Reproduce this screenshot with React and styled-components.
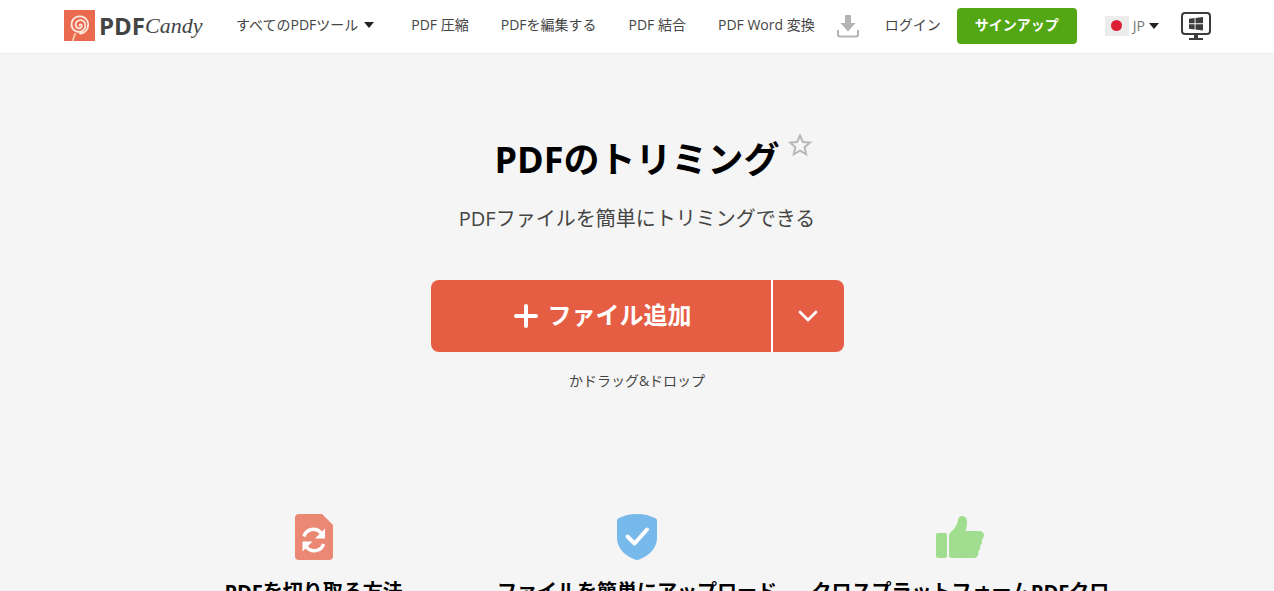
import React from 'react'
import styled, { createGlobalStyle } from 'styled-components'

const GlobalStyle = createGlobalStyle`
  *, *::before, *::after {
    box-sizing: border-box;
  }

  body {
    margin: 0;
    background: #f5f5f5;
    color: #444;
    font-family: 'Open Sans', 'Noto Sans CJK JP', sans-serif;
    font-size: 14px;
    line-height: 20px;
  }

  button {
    font-family: inherit;
    border: 0;
    padding: 0;
    cursor: pointer;
  }

  svg {
    display: block;
    flex-shrink: 0;
  }
`

const Header = styled.header`
  display: flex;
  align-items: center;
  justify-content: space-between;
  height: 54px;
  padding: 0 63px 2px 64px;
  background: #fff;
  border-bottom: 1px solid #ececec;
  white-space: nowrap;
`

const Group = styled.div`
  display: flex;
  align-items: center;
`

const Logo = styled.a`
  display: flex;
  align-items: center;
  width: 135px;
  margin-right: 37px;
  color: #444;
  text-decoration: none;
`

const LogoName = styled.span`
  margin-left: 4px;
  font-size: 24px;
  line-height: 32px;
  font-weight: 700;
`

const LogoScript = styled.span`
  font-family: 'Liberation Serif', serif;
  font-size: 22px;
  line-height: 32px;
  font-style: italic;
`

const Nav = styled.nav`
  display: flex;
  align-items: center;
  gap: 32px;
`

const NavLink = styled.a`
  padding-bottom: 2px;
  color: #444;
  text-decoration: none;
`

const MenuButton = styled.button`
  display: flex;
  align-items: center;
  gap: ${props => props.$gap}px;
  margin-right: ${props => props.$after || 0}px;
  padding-bottom: ${props => props.$lift || 0}px;
  background: none;
  color: ${props => props.$color || '#444'};
  font-size: 14px;
  line-height: 20px;
`

const Caret = styled.span`
  border: 5px solid transparent;
  border-top: 6px solid #222;
  border-bottom: 0;
`

const IconLink = styled.a`
  margin-right: ${props => props.$after || 0}px;
  padding-top: 2px;
`

const SignUp = styled.button`
  width: 120px;
  height: 36px;
  margin: 0 28px 0 16px;
  padding-bottom: 2px;
  border-radius: 4px;
  background: #53a614;
  color: #fff;
  font-size: 14px;
  line-height: 20px;
  font-weight: 700;
`

const Flag = styled.span`
  display: flex;
  align-items: center;
  justify-content: center;
  width: 24px;
  height: 20px;
  background: #ececec;

  &::before {
    content: '';
    width: 11px;
    height: 11px;
    border-radius: 50%;
    background: #dc1f35;
  }
`

const Hero = styled.section`
  display: flex;
  flex-direction: column;
  align-items: center;
  padding: 82px 20px 0;
  text-align: center;
`

const Title = styled.h1`
  position: relative;
  margin: 0;
  color: #000;
  font-size: 36px;
  line-height: 48px;
  font-weight: 700;
`

const Favorite = styled.button`
  position: absolute;
  top: -4px;
  left: 100%;
  margin-left: 8px;
  background: none;
`

const Subtitle = styled.p`
  margin: 21px 0 47px;
  font-size: 20px;
  line-height: 28px;
`

const Upload = styled.div`
  display: flex;
  gap: 2px;
  width: 100%;
  max-width: 413px;
  height: 72px;
  border-radius: 8px;
  overflow: hidden;
  background: #fff;
`

const AddFile = styled.button`
  flex: 1;
  display: flex;
  align-items: center;
  justify-content: center;
  gap: 10px;
  padding: 0 0 2px 4px;
  background: #e55d42;
  color: #fff;
  font-size: 24px;
  line-height: 32px;
  font-weight: 700;
`

const MoreSources = styled.button`
  display: flex;
  align-items: center;
  justify-content: center;
  width: 71px;
  background: #e55d42;
`

const DropHint = styled.p`
  margin: 19px 0 0;
`

const Features = styled.section`
  display: grid;
  grid-template-columns: repeat(3, 1fr);
  max-width: 970px;
  margin: 121px auto 0;
`

const Feature = styled.article`
  display: flex;
  flex-direction: column;
  align-items: center;
  padding: 0 10px;
  text-align: center;
`

const FeatureIcon = styled.div`
  display: flex;
  align-items: center;
  height: 50px;
`

const FeatureTitle = styled.h2`
  margin: 16px 0 0;
  color: #000;
  font-size: 20px;
  line-height: 28px;
  font-weight: 700;
  word-break: break-all;
`

const LogoMark = () =>
  <svg width="31" height="31" viewBox="0 0 31 31" aria-hidden="true">
    <rect width="31" height="31" fill="#ea6a50" />
    <g fill="none" stroke="#ffe9df" strokeLinecap="round">
      <path d="M11.500 23 8.500 31" stroke="#f9c6a2" strokeWidth="2" strokeLinecap="butt" />
      <path
        d="M15.600 15.300c.2-1.400 2-1.200 2.200.3.2 2-2 3.200-3.800 2.500-2.500-.9-3-4-1.600-6 1.900-2.600 5.600-2.600 7.600-.4 2.300 2.700 1.700 6.800-1 8.800-3.400 2.500-8.300 1.500-10.400-2-2.300-4-1-9 3-11.200 4.500-2.200 9.700-.6 11.900 3.800 1 2.100 1 4.500.2 6.700-1.200 3.200-4.200 5.600-7.700 5.900"
        strokeWidth="1.800"
      />
    </g>
  </svg>

const DownloadIcon = () =>
  <svg width="22" height="23" viewBox="0 0 22 23" aria-hidden="true">
    <path d="M8 0h6v8h4.500L11 16.500 3.500 8H8z" fill="#b4b4b4" />
    <path d="M1 15v4.500Q1 21.500 3 21.500h16q2 0 2-2V15" fill="none" stroke="#b4b4b4" strokeWidth="2" />
  </svg>

const DesktopIcon = () =>
  <svg width="30" height="29" viewBox="0 0 30 29" aria-hidden="true">
    <rect x="1" y="1" width="28" height="21" rx="3" fill="none" stroke="#3c3c3c" strokeWidth="2" />
    <path d="M13 22h4v4h5v2H8v-2h5z" fill="#3c3c3c" />
    <path d="M8 6.800 13.600 6v5.300H8zM14.500 5.900 22 5v6.300h-7.500zM8 12.200h5.600v5.300L8 16.700zM14.500 12.200H22v6.300l-7.500-.9z" fill="#3c3c3c" />
  </svg>

const StarIcon = () =>
  <svg width="25" height="25" viewBox="0 0 25 25" aria-hidden="true">
    <path
      d="m12 3.500 2.900 6.500 7 .6-5.300 4.700 1.600 7-6.200-3.700-6.200 3.700 1.600-7-5.300-4.700 7-.6z"
      fill="none"
      stroke="#b8b8b8"
      strokeWidth="2"
    />
  </svg>

const PlusIcon = () =>
  <svg width="24" height="28" viewBox="0 0 24 28" aria-hidden="true">
    <path d="M12 5v20M2 15h20" stroke="#fff" strokeWidth="4" strokeLinecap="round" />
  </svg>

const ChevronIcon = () =>
  <svg width="20" height="12" viewBox="0 0 20 12" aria-hidden="true">
    <path d="m2 2 8 8 8-8" fill="none" stroke="#fff" strokeWidth="2.700" strokeLinecap="round" strokeLinejoin="round" />
  </svg>

const ConvertIcon = () =>
  <svg width="38" height="46" viewBox="0 0 38 46" aria-hidden="true">
    <path d="M4 0h23l11 11v31q0 4-4 4H4q-4 0-4-4V4q0-4 4-4z" fill="#ea8874" />
    <g fill="none" stroke="#fff" strokeWidth="3.400">
      <path d="M9 22.500c2-8 12.500-9.500 17-3.500" />
      <path d="M28.500 30c-2 7.500-12.500 9-17 3" />
    </g>
    <path d="M30 14.500v10H20zM7.500 37.500v-10h10z" fill="#fff" />
  </svg>

const ShieldIcon = () =>
  <svg width="40" height="46" viewBox="0 0 40 46" aria-hidden="true">
    <path d="M20 0c7 0 13 1.500 18.500 4.300Q40 5 40 6.500V24c0 11-9 18.500-18.500 21.700q-1.500.5-3 0C9 42.500 0 35 0 24V6.500Q0 5 1.500 4.300C7 1.500 13 0 20 0z" fill="#78b9eb" />
    <path d="m10.500 22.500 7 7 12.500-14" fill="none" stroke="#fff" strokeWidth="4" strokeLinecap="round" strokeLinejoin="round" />
  </svg>

const ThumbIcon = () =>
  <svg width="48" height="42" viewBox="0 0 48 42" aria-hidden="true">
    <g fill="#a0dd8e">
      <rect y="17" width="11" height="25" rx="2" />
      <path d="M13 20q0-2 1.500-3.500C18.500 12.500 21.300 9.500 22 4c.5-5.500 8.500-5.300 9 1 .2 3.500-.3 7-1.500 10H43c4 0 5.500 3 4.800 5.500-.3 1.500-1.100 2.600-2.100 3.300.9 2.500.1 4.500-1.700 6 .7 2.500-.2 4.500-1.800 5.700.4 3.500-1 6.500-4.700 6.500H18q-3 0-5-1z" />
    </g>
  </svg>

const links = ['PDF 圧縮', 'PDFを編集する', 'PDF 結合', 'PDF Word 変換']

const features = [
  { title: 'PDFを切り取る方法', icon: <ConvertIcon /> },
  { title: 'ファイルを簡単にアップロード', icon: <ShieldIcon /> },
  { title: 'クロスプラットフォームPDFクロッパー', icon: <ThumbIcon /> },
]

const App = () =>
  <>
    <GlobalStyle />
    <Header>
      <Group>
        <Logo href="#">
          <LogoMark />
          <LogoName>PDF</LogoName>
          <LogoScript>Candy</LogoScript>
        </Logo>
        <MenuButton $gap={6} $after={37} $lift={2}>
          すべてのPDFツール
          <Caret />
        </MenuButton>
        <Nav>
          {links.map(link =>
            <NavLink key={link} href="#">
              {link}
            </NavLink>
          )}
        </Nav>
      </Group>
      <Group>
        <IconLink href="#" aria-label="ダウンロード" $after={26}>
          <DownloadIcon />
        </IconLink>
        <NavLink href="#">ログイン</NavLink>
        <SignUp>サインアップ</SignUp>
        <MenuButton $gap={4} $after={22} $color="#777">
          <Flag />
          JP
          <Caret />
        </MenuButton>
        <IconLink href="#" aria-label="Windows">
          <DesktopIcon />
        </IconLink>
      </Group>
    </Header>
    <main>
      <Hero>
        <Title>
          PDFのトリミング
          <Favorite aria-label="お気に入り">
            <StarIcon />
          </Favorite>
        </Title>
        <Subtitle>PDFファイルを簡単にトリミングできる</Subtitle>
        <Upload>
          <AddFile>
            <PlusIcon />
            ファイル追加
          </AddFile>
          <MoreSources aria-label="その他">
            <ChevronIcon />
          </MoreSources>
        </Upload>
        <DropHint>かドラッグ&ドロップ</DropHint>
      </Hero>
      <Features>
        {features.map(({ title, icon }) =>
          <Feature key={title}>
            <FeatureIcon>
              {icon}
            </FeatureIcon>
            <FeatureTitle>
              {title}
            </FeatureTitle>
          </Feature>
        )}
      </Features>
    </main>
  </>

export default App
